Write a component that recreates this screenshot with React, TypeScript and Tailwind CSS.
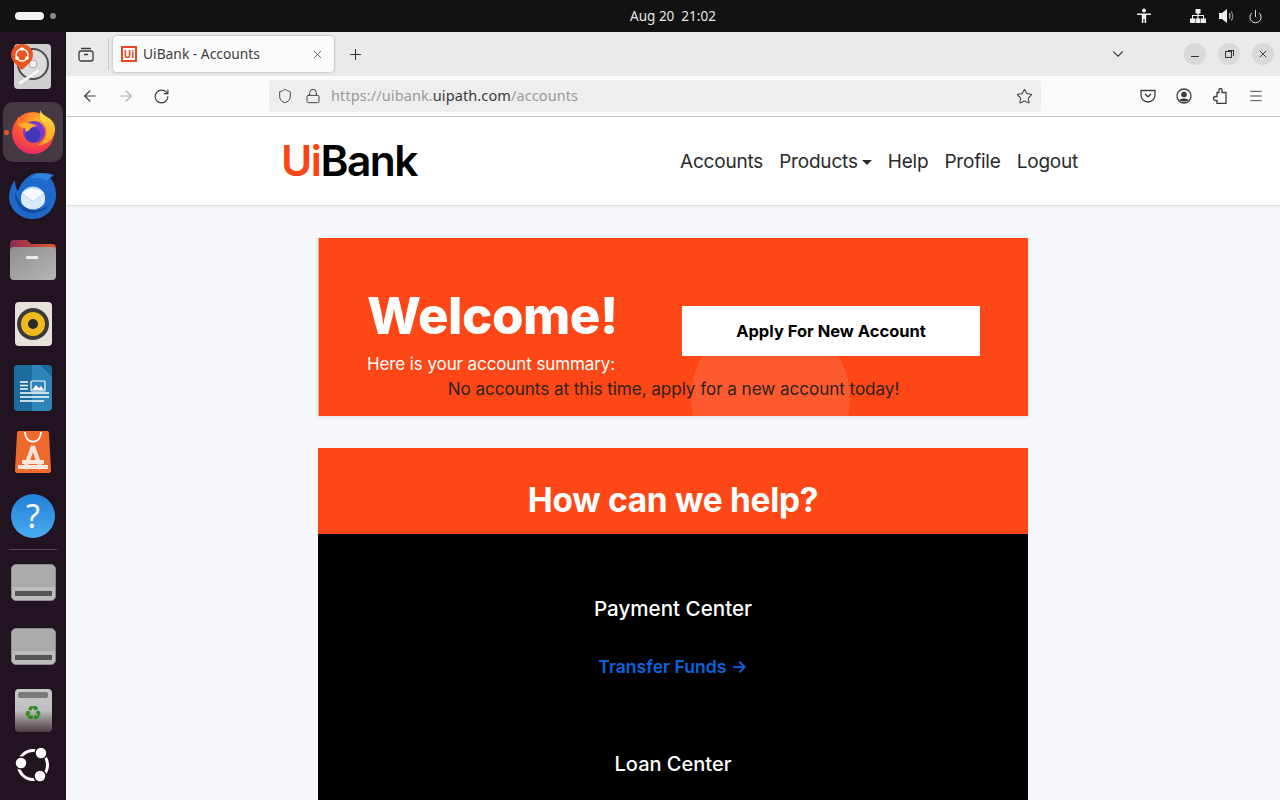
import { ArrowLeft, ArrowRight, RotateCw, Star, Plus, X, ChevronDown, Menu, Lock, Shield, Power } from 'lucide-react'

const heading = { fontFamily: 'Inter, sans-serif' }

function TopBar() {
  return (
    <div className="h-8 bg-[#121212] flex items-center justify-between pl-[15px] pr-[17px] text-white relative shrink-0">
      <div className="flex items-center gap-[6px]">
        <div className="w-[29px] h-[8px] rounded-full bg-[#f2f2f2]" />
        <div className="w-[6px] h-[6px] rounded-full bg-[#8a8a8a]" />
      </div>
      <div className="absolute left-[66px] right-0 text-center text-[13.5px] text-[#e6e6e6] font-['Noto_Sans',sans-serif] pointer-events-none">
        Aug 20&nbsp;&nbsp;21:02
      </div>
      <div className="flex items-center">
        <svg width="14" height="16" viewBox="0 0 14 16" className="mr-[39px]" fill="#f0f0f0">
          <circle cx="7" cy="2.500" r="2" />
          <path d="M0 5.500h14v1.600H9.200V15H7.600v-4H6.400v4H4.800V7.100H0z" />
        </svg>
        <svg width="16" height="14" viewBox="0 0 16 14" className="mr-[13px]" fill="#f0f0f0">
          <path d="M5.500 0h5v4.500H8.600V6H14v3.500h2V14h-5V9.500h2V7H8.600v2.500h1.900V14h-5V9.500h1.900V7H3v2.500h2V14H0V9.500h2V6h5.400V4.500H5.500z" />
        </svg>
        <svg width="15" height="16" viewBox="0 0 15 16" className="mr-[14px]" fill="none">
          <path d="M0 5h3l5-4v14l-5-4H0z" fill="#f0f0f0" />
          <path d="M10 5.500a3.500 3.500 0 0 1 0 5" stroke="#bdbdbd" strokeWidth="1.200" />
          <path d="M12 3.500a6.500 6.500 0 0 1 0 9" stroke="#8a8a8a" strokeWidth="1.200" />
        </svg>
        <Power className="w-[15px] h-[15px] text-[#f0f0f0]" strokeWidth={1.5} />
      </div>
    </div>
  )
}

function Dock() {
  return (
    <div className="w-[66px] h-[768px] shrink-0 bg-[#21131f] flex flex-col items-center relative overflow-hidden">
      {/* disk installer */}
      <div className="h-[70px] w-full flex items-center justify-center relative shrink-0">
        <svg width="38" height="46" viewBox="0 0 38 46" className="mt-[-1px]">
          <rect x="0" y="0" width="37" height="45" rx="4" fill="#cfcfcf" />
          <circle cx="19" cy="20" r="15" fill="#dcdcdc" stroke="#4d4d4d" strokeWidth="2" />
          <circle cx="19" cy="20" r="4" fill="#f0f0f0" stroke="#aaa" />
          <path d="M6 39 L24 27" stroke="#f5f5f5" strokeWidth="3" strokeLinecap="round" />
        </svg>
        <svg width="22" height="26" viewBox="0 0 22 26" className="absolute left-[11px] top-[12px]">
          <path d="M11 0a11 11 0 0 1 11 11c0 6-6 10-11 15C6 21 0 17 0 11A11 11 0 0 1 11 0z" fill="#e95420" />
          <circle cx="11" cy="11" r="6" fill="none" stroke="#fff" strokeWidth="1.500" />
          <circle cx="11" cy="5" r="1.800" fill="#fff" />
          <circle cx="6" cy="14" r="1.800" fill="#fff" />
          <circle cx="16" cy="14" r="1.800" fill="#fff" />
        </svg>
      </div>
      {/* firefox */}
      <div className="w-[60px] h-[60px] rounded-[10px] bg-[#453a44] flex items-center justify-center relative shrink-0">
        <div className="absolute left-[1px] top-[28px] w-[5px] h-[5px] rounded-full bg-[#e95420]" />
        <svg width="44" height="44" viewBox="0 0 44 44" className="ml-[1px]">
          <defs>
            <radialGradient id="ffbody" cx="0.600" cy="0.200" r="0.950">
              <stop offset="0" stopColor="#ffb32b" />
              <stop offset="0.500" stopColor="#ff5a2a" />
              <stop offset="1" stopColor="#e5157f" />
            </radialGradient>
            <linearGradient id="fftail" x1="0.300" y1="0" x2="0.800" y2="1">
              <stop offset="0" stopColor="#ffe14a" />
              <stop offset="1" stopColor="#ffa21f" />
            </linearGradient>
          </defs>
          <circle cx="21" cy="23" r="21" fill="url(#ffbody)" />
          <path d="M28 0c1 5-1 8 1 11 5 3 7 9 5 15-1 4-4 7-8 9 9 0 16-6 17-14 1-6-3-12-8-14-2-1-5-3-7-7z" fill="url(#fftail)" />
          <circle cx="22" cy="22" r="11" fill="#7b3ccb" />
          <circle cx="21" cy="25" r="7.500" fill="#4137b8" />
          <path d="M6 15c3-3 8-3 10-2 3 1 7 1 9 3-3 0-5 1-7 3-1 2-3 3-5 2 1-2 0-3-1-3-2 0-4-1-6-3z" fill="#ffb02b" />
          <path d="M7 6c0 4 2 6 5 7-3 0-5 1-7 3 0-4 0-7 2-10z" fill="#ff7a1f" />
        </svg>
      </div>
      {/* thunderbird */}
      <div className="h-[66px] w-full flex items-center justify-center shrink-0 pt-[2px]">
        <svg width="48" height="46" viewBox="0 0 48 46">
          <path d="M27 0c6-1 13 0 18 2-2 1-3 2-4 3 4 4 6 10 6 17 0 13-10 24-23 24S1 37 0 25C0 18 2 12 6 7c0 5 1 8 3 11C12 10 18 2 27 0z" fill="#1e69c9" />
          <path d="M27 1c6-1 12 0 17 2-3 1-5 3-6 5-4-3-11-4-16-2 1-2 3-4 5-5z" fill="#2f84dc" />
          <path d="M6 18c-1 10 4 20 15 22 9 1 16-3 20-10-6 7-15 9-23 5-6-3-10-9-12-17z" fill="#0f4ea3" />
          <ellipse cx="24" cy="25" rx="12" ry="11.500" fill="#b5d6f4" />
          <path d="M13 20c6-6 16-6 22 0l-11 8z" fill="#f5f9fe" />
          <path d="M13 21l11 8 11-8c2 5 1 10-2 12-5 4-13 4-18 0-3-2-4-7-2-12z" fill="#dbeafa" />
        </svg>
      </div>
      {/* files */}
      <div className="h-[64px] w-full flex items-center justify-center shrink-0">
        <svg width="46" height="42" viewBox="0 0 46 42">
          <defs>
            <linearGradient id="fold" x1="0" y1="0" x2="1" y2="0">
              <stop offset="0" stopColor="#8a2a55" />
              <stop offset="1" stopColor="#e4572a" />
            </linearGradient>
            <linearGradient id="foldb" x1="0" y1="0" x2="1" y2="1">
              <stop offset="0" stopColor="#8f8f8f" />
              <stop offset="1" stopColor="#b5b5b5" />
            </linearGradient>
          </defs>
          <path d="M0 5a4 4 0 0 1 4-4h13l4 4h21a4 4 0 0 1 4 4v10H0z" fill="url(#fold)" />
          <rect x="0" y="8" width="46" height="33" rx="4" fill="url(#foldb)" />
          <rect x="16" y="17" width="12" height="3" rx="1" fill="#ececec" />
        </svg>
      </div>
      {/* rhythmbox */}
      <div className="h-[64px] w-full flex items-center justify-center shrink-0">
        <div className="w-[37px] h-[44px] rounded-[4px] bg-[#e6e2d8] flex items-center justify-center">
          <div className="w-[32px] h-[32px] rounded-full bg-[#3b3b3b] flex items-center justify-center">
            <div className="w-[24px] h-[24px] rounded-full bg-[#edbb1e] flex items-center justify-center">
              <div className="w-[10px] h-[10px] rounded-full bg-[#2b2b2b]" />
            </div>
          </div>
        </div>
      </div>
      {/* writer */}
      <div className="h-[64px] w-full flex items-center justify-center shrink-0">
        <svg width="38" height="46" viewBox="0 0 38 46">
          <path d="M4 0h23l11 11v31a4 4 0 0 1-4 4H4a4 4 0 0 1-4-4V4a4 4 0 0 1 4-4z" fill="#2e86b8" />
          <path d="M4 0h14v46H4a4 4 0 0 1-4-4V4a4 4 0 0 1 4-4z" fill="#1b6b9d" />
          <path d="M27 0h7a4 4 0 0 1 4 4v7z" fill="#1b6b9d" />
          <rect x="17" y="16" width="14" height="10" rx="1" fill="none" stroke="#fff" strokeWidth="1.200" />
          <path d="M18 25l4-5 3 3 2-2 3 4z" fill="#fff" />
          <path d="M6 17h8M6 20.500h8M6 24h8M6 28h29M6 32h29M6 36h24" stroke="#fff" strokeWidth="1.500" />
        </svg>
      </div>
      {/* app center */}
      <div className="h-[64px] w-full flex items-center justify-center shrink-0">
        <svg width="36" height="42" viewBox="0 0 36 42">
          <path d="M2 2a2 2 0 0 1 2-2h28a2 2 0 0 1 2 2l2 37a2.500 2.500 0 0 1-3 3H3a2.500 2.500 0 0 1-3-3z" fill="#ee6a2c" />
          <path d="M10 1c0 13 16 13 16 0" fill="none" stroke="#fff" strokeWidth="1.800" />
          <path d="M18 15L10 38M18 15l8 23M7 31h22M3 36h30" stroke="#fbe6da" strokeWidth="4" fill="none" />
        </svg>
      </div>
      {/* help */}
      <div className="h-[64px] w-full flex items-center justify-center shrink-0">
        <div className="w-[44px] h-[44px] rounded-full bg-gradient-to-b from-[#2180d8] to-[#4aaaf0] flex items-center justify-center text-white text-[32px] font-['Noto_Sans',sans-serif] leading-none">
          ?
        </div>
      </div>
      <div className="w-[48px] h-px bg-[#54464f] mt-[1px] shrink-0" />
      {/* drives */}
      <Drive />
      <Drive />
      {/* trash */}
      <div className="h-[64px] w-full flex items-center justify-center shrink-0">
        <div className="w-[37px] h-[43px] rounded-[4px] bg-gradient-to-b from-[#c8c8c8] via-[#c0c0c0] to-[#4d3f47] flex flex-col items-center pt-[3px] gap-[3px]">
          <div className="w-[30px] h-[6px] rounded-[2px] bg-[#7a7a7a]" />
          <span className="text-[#2e8b20] text-[20px] leading-[24px] font-['DejaVu_Sans',sans-serif]">♻</span>
        </div>
      </div>
      {/* ubuntu */}
      <div className="h-[46px] w-full flex items-center justify-center shrink-0">
        <svg width="36" height="36" viewBox="0 0 36 36">
          <circle cx="18" cy="18" r="14.500" fill="none" stroke="#fff" strokeWidth="3" />
          <circle cx="6" cy="16" r="6" fill="#fff" stroke="#21131f" strokeWidth="1.500" />
          <circle cx="26" cy="6" r="6" fill="#fff" stroke="#21131f" strokeWidth="1.500" />
          <circle cx="25" cy="29" r="6" fill="#fff" stroke="#21131f" strokeWidth="1.500" />
        </svg>
      </div>
    </div>
  )
}

function Drive() {
  return (
    <div className="h-[64px] w-full flex items-center justify-center shrink-0">
      <div className="w-[45px] h-[37px] rounded-[5px] bg-[#ababab] flex flex-col justify-end overflow-hidden border border-[#8b8b8b]">
        <div className="h-[13px] bg-[#bdbdbd] flex items-center justify-center">
          <div className="w-[37px] h-[5px] bg-[#565656]" />
        </div>
      </div>
    </div>
  )
}

function BrowserChrome() {
  return (
    <>
      <div className="h-[44px] bg-[#eaeaea] flex items-center relative font-['Noto_Sans',sans-serif] shrink-0">
        <div className="w-[43px] h-[32px] flex items-center justify-center border-r border-[#c8c8c8] mt-[-1px] shrink-0">
          <svg width="16" height="16" viewBox="0 0 16 16" fill="none" stroke="#3d3d3d" strokeWidth="1.300" className="ml-[-3px]">
            <rect x="1" y="5" width="14" height="10" rx="2" />
            <path d="M3 2.500h10M6 8.500h4" />
          </svg>
        </div>
        <div className="ml-[4px] w-[221px] h-[36px] bg-[#fbfbfb] rounded-[4px] shadow-[0_0_3px_rgba(0,0,0,0.3)] flex items-center pl-[8px] pr-[10px] shrink-0">
          <div className="w-[16px] h-[16px] border-2 border-[#e8481c] flex items-center justify-center bg-white text-[#e8481c] text-[10px] font-bold leading-none">
            Ui
          </div>
          <span className="ml-[6px] text-[13.8px] leading-[18px] text-[#3d3d3d] flex-1">UiBank - Accounts</span>
          <X className="w-[13px] h-[13px] text-[#444]" strokeWidth={1.500} />
        </div>
        <Plus className="ml-[13px] w-[17px] h-[17px] text-[#333]" strokeWidth={1.500} />
        <ChevronDown className="ml-auto mr-[57px] w-[18px] h-[18px] text-[#444]" strokeWidth={1.500} />
        <div className="flex items-center gap-[12px] mr-[6px]">
          <div className="w-[22px] h-[22px] rounded-full bg-[#d9d9d9] flex items-center justify-center">
            <div className="w-[8px] h-px bg-[#333] mt-[5px]" />
          </div>
          <div className="w-[22px] h-[22px] rounded-full bg-[#d9d9d9] flex items-center justify-center relative">
            <div className="w-[7px] h-[7px] border border-[#333] mt-[1px] ml-[-1px]" />
            <div className="absolute w-[6px] h-[6px] border-t border-r border-[#333] top-[7px] left-[10px]" />
          </div>
          <div className="w-[22px] h-[22px] rounded-full bg-[#d9d9d9] flex items-center justify-center">
            <X className="w-[12px] h-[12px] text-[#333]" strokeWidth={1.800} />
          </div>
        </div>
      </div>
      <div className="h-[41px] bg-[#fbfbfb] border-b border-[#c8c8c8] flex items-center font-['Noto_Sans',sans-serif] shrink-0">
        <ArrowLeft className="ml-[15px] w-[18px] h-[18px] text-[#3d3d3d]" strokeWidth={1.500} />
        <ArrowRight className="ml-[18px] w-[18px] h-[18px] text-[#b0b0b0]" strokeWidth={1.500} />
        <RotateCw className="ml-[18px] w-[17px] h-[17px] text-[#3d3d3d]" strokeWidth={1.600} />
        <div className="ml-[99px] w-[772px] h-[32px] rounded-[4px] bg-[#eeeeee] flex items-center pl-[8px] pr-[8px] shrink-0">
          <Shield className="w-[16px] h-[16px] text-[#444]" strokeWidth={1.500} />
          <Lock className="ml-[12px] w-[16px] h-[16px] text-[#444]" strokeWidth={1.500} />
          <span className="ml-[10px] text-[14.5px] text-[#9a9a9a] flex-1 tracking-[0.1px]">
            https://uibank.<span className="text-[#3a3a3a]">uipath.com</span>/accounts
          </span>
          <Star className="w-[17px] h-[17px] text-[#444]" strokeWidth={1.500} />
        </div>
        <div className="ml-auto flex items-center gap-[20px] mr-[16px] text-[#3d3d3d]">
          <svg width="16" height="16" viewBox="0 0 16 16" fill="none" stroke="currentColor" strokeWidth="1.300">
            <path d="M1 2.500h14v5a7 6.500 0 0 1-14 0zM5 6l3 2.800L11 6" />
          </svg>
          <svg width="16" height="16" viewBox="0 0 16 16">
            <circle cx="8" cy="8" r="7" fill="none" stroke="currentColor" strokeWidth="1.300" />
            <circle cx="8" cy="6.500" r="2.800" fill="currentColor" />
            <path d="M3.500 12c1-2 8-2 9 0-2 2-7 2-9 0z" fill="currentColor" />
          </svg>
          <svg width="16" height="16" viewBox="0 0 16 16" fill="none" stroke="currentColor" strokeWidth="1.300">
            <path d="M7 1.500a1.500 1.500 0 0 1 3 0V4h4v11H5v-3H3.500a2 2 0 0 1 0-4H5V4h2z" transform="translate(0 0.500)" />
          </svg>
          <Menu className="w-[16px] h-[16px]" strokeWidth={1.400} />
        </div>
      </div>
    </>
  )
}

function Nav() {
  return (
    <div className="h-[89px] bg-white border-b border-[#dfdfdf] flex items-center shrink-0 shadow-[0_1px_3px_rgba(0,0,0,0.04)]">
      <div className="ml-[215px] text-[42.5px] font-semibold leading-none tracking-[-1.5px] mt-[1px]" style={heading}>
        <span className="text-[#fa4616]">Ui</span>
        <span className="text-black">Bank</span>
      </div>
      <div className="ml-[263px] flex items-center gap-[16px] text-[19px] text-[#2a2a2a] tracking-[-0.2px] mt-[2px]" style={heading}>
        <span>Accounts</span>
        <span className="flex items-center gap-[4px]">
          Products
          <span className="w-0 h-0 border-l-[5px] border-r-[5px] border-t-[5px] border-l-transparent border-r-transparent border-t-[#2a2a2a]" />
        </span>
        <span>Help</span>
        <span>Profile</span>
        <span>Logout</span>
      </div>
    </div>
  )
}

function Welcome() {
  return (
    <div className="mt-[32px] w-[710px] h-[178px] bg-[#fe4716] border-l border-[#f7a78c] relative overflow-hidden shadow-[0_1px_4px_rgba(0,0,0,0.1)] shrink-0" style={heading}>
      <div className="absolute left-[372px] top-[80px] w-[159px] h-[159px] rounded-full bg-[#fe5a30]" />
      <div className="relative flex pt-[49px] pl-[48px]">
        <div className="w-[315px]">
          <div className="text-[51px] leading-[58px] font-extrabold text-white tracking-[-0.5px]">Welcome!</div>
          <div className="mt-[6px] text-[17px] leading-[26px] text-white tracking-[-0.1px]">Here is your account summary:</div>
        </div>
        <div className="mt-[19px] w-[298px] h-[50px] bg-white flex items-center justify-center text-[16.5px] font-bold text-black">
          Apply For New Account
        </div>
      </div>
      <div className="relative text-center text-[17.1px] leading-[24px] text-[#2b2320] tracking-[-0.05px]">
        No accounts at this time, apply for a new account today!
      </div>
    </div>
  )
}

function Help() {
  return (
    <div className="mt-[32px] w-[710px] shrink-0" style={heading}>
      <div className="h-[86px] bg-[#fe4716] flex items-center justify-center pt-[18px] text-white text-[33.5px] font-bold tracking-[-0.3px]">
        How can we help?
      </div>
      <div className="bg-black flex flex-col items-center pt-[60px] pb-[60px] text-center">
        <div className="text-[20.6px] leading-[30px] text-white font-medium">Payment Center</div>
        <div className="mt-[28px] text-[17.6px] leading-[30px] font-semibold text-[#0a64dc]">Transfer Funds →</div>
        <div className="mt-[67px] text-[20px] leading-[30px] text-white font-medium">Loan Center</div>
      </div>
    </div>
  )
}

export default function App() {
  return (
    <div className="w-[1280px] h-[800px] overflow-hidden flex flex-col bg-[#f5f7fb]">
      <TopBar />
      <div className="flex flex-1 min-h-0">
        <Dock />
        <div className="flex-1 min-w-0 flex flex-col">
          <BrowserChrome />
          <Nav />
          <div className="flex flex-col items-start pl-[252px] overflow-hidden flex-1">
            <Welcome />
            <Help />
          </div>
        </div>
      </div>
    </div>
  )
}
